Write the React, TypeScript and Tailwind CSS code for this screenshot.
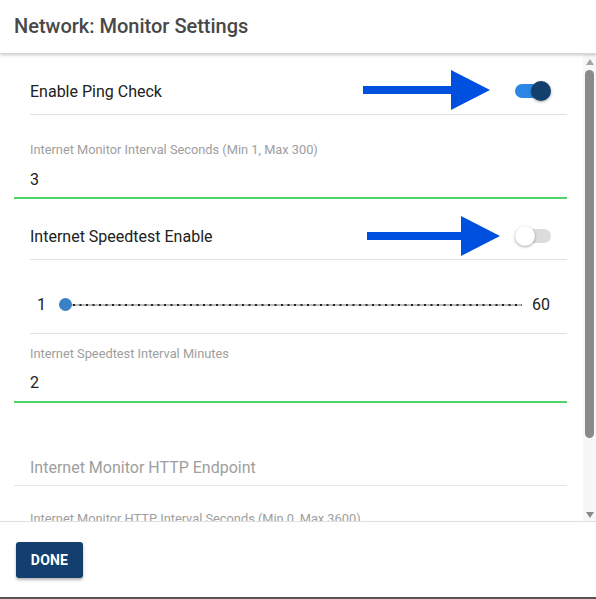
import React from "react";

function Arrow({ className, shaft }: { className: string; shaft: number }) {
  const w = shaft + 40;
  return (
    <svg className={className} width={w} height="42" viewBox={`0 0 ${w} 42`}>
      <rect x="0" y="17" width={shaft + 2} height="8" fill="#0050e0" />
      <polygon points={`${shaft},1 ${shaft + 39},21 ${shaft},41`} fill="#0050e0" />
    </svg>
  );
}

function Toggle({ on }: { on: boolean }) {
  return (
    <div className="relative w-[36px] h-[22px] flex items-center">
      <div
        className={
          on
            ? "w-[31px] h-[14px] rounded-full bg-[#2b87e3]"
            : "w-[36px] h-[14px] rounded-full bg-[#dcdcdc]"
        }
      />
      <div
        className={
          on
            ? "absolute left-[16px] top-[1px] w-[20px] h-[20px] rounded-full bg-[#123f6e] shadow-[0_1px_3px_rgba(0,0,0,0.35)]"
            : "absolute left-0 top-[1px] w-[20px] h-[20px] rounded-full bg-white shadow-[0_1px_3px_rgba(0,0,0,0.35)]"
        }
      />
    </div>
  );
}

export default function App() {
  return (
    <div className="w-[596px] h-[599px] flex flex-col bg-white font-['Roboto',sans-serif] border-b-2 border-[#555] overflow-hidden">
      <div className="relative z-10 h-[54px] shrink-0 px-[14px] flex items-center shadow-[0_1px_3px_rgba(0,0,0,0.22)] border-b border-[#d6d6d6]">
        <span className="text-[20px] font-medium text-[#484848] -mt-[2px]">Network: Monitor Settings</span>
      </div>

      <div className="flex-1 min-h-0 flex">
        <div className="flex-1 overflow-hidden pl-[14px] pr-[16px]">
          {/* Row 1 */}
          <div className="relative mt-[14px] ml-[16px] h-[47px] border-b border-[#e0e0e0] flex items-center justify-between">
            <span className="text-[16px] text-[#212121] mt-[1px]">Enable Ping Check</span>
            <div className="mr-[16px]">
              <Toggle on={true} />
            </div>
            <Arrow className="absolute left-[333px] top-[1px]" shaft={88} />
          </div>

          {/* Input 1 */}
          <div className="pt-[28px] pb-[5px] border-b-2 border-[#4fd36a]">
            <div className="pl-[16px] text-[12.8px] leading-[14px] text-[#9e9e9e]">
              Internet Monitor Interval Seconds (Min 1, Max 300)
            </div>
            <div className="pl-[16px] mt-[11px] text-[16px] leading-[24px] text-[#212121]">3</div>
          </div>

          {/* Row 2 */}
          <div className="relative mt-[14px] ml-[16px] h-[47px] border-b border-[#e0e0e0] flex items-center justify-between">
            <span className="text-[16px] text-[#212121] mt-[1px]">Internet Speedtest Enable</span>
            <div className="mr-[16px]">
              <Toggle on={false} />
            </div>
            <Arrow className="absolute left-[337px] top-[2px]" shaft={94} />
          </div>

          {/* Slider */}
          <div className="ml-[16px] h-[74px] pt-[16px] border-b border-[#e0e0e0] flex items-center">
            <span className="w-[14px] ml-[7px] text-[16px] text-[#212121]">1</span>
            <div className="relative flex-1 h-[13px] ml-[8px] mr-[10px] flex items-center">
              <svg className="w-full h-[2px]" preserveAspectRatio="none" viewBox="0 0 100 2">
                <line x1="0" y1="1" x2="100" y2="1" stroke="#bdbdbd" strokeWidth="2" />
              </svg>
              <svg className="absolute left-0 top-[5.5px] w-full h-[2px]" height="2">
                <line x1="1" y1="1" x2="100%" y2="1" stroke="#222" strokeWidth="2" strokeDasharray="2 4.5" />
              </svg>
              <div className="absolute left-0 top-0 w-[13px] h-[13px] rounded-full bg-[#3a81c6]" />
            </div>
            <span className="text-[16px] text-[#212121] mr-[17px]">60</span>
          </div>

          {/* Input 2 */}
          <div className="pt-[13px] pb-[6px] border-b-2 border-[#4fd36a]">
            <div className="pl-[16px] text-[12.8px] leading-[14px] text-[#9e9e9e]">
              Internet Speedtest Interval Minutes
            </div>
            <div className="pl-[16px] mt-[10px] text-[16px] leading-[24px] text-[#212121]">2</div>
          </div>

          {/* Input 3 */}
          <div className="pt-[53px] pb-[5px] border-b border-[#e6e6e6]">
            <div className="pl-[16px] text-[16px] leading-[24px] text-[#9e9e9e]">
              Internet Monitor HTTP Endpoint
            </div>
          </div>

          <div className="pt-[26px] pl-[16px] text-[12.8px] leading-[14px] text-[#9e9e9e] whitespace-nowrap">
            Internet Monitor HTTP Interval Seconds (Min 0, Max 3600)
          </div>
        </div>

        {/* Scrollbar */}
        <div className="w-[13px] shrink-0 bg-[#f7f7f7] flex flex-col items-center pt-[5px] pb-[3px]">
          <svg width="8" height="6" viewBox="0 0 8 6">
            <polygon points="4,0 8,6 0,6" fill="#a3a3a3" />
          </svg>
          <div className="mt-[5px] w-[9px] h-[368px] rounded-full bg-[#8a8a8a]" />
          <div className="flex-1" />
          <svg width="8" height="6" viewBox="0 0 8 6">
            <polygon points="0,0 8,0 4,6" fill="#8a8a8a" />
          </svg>
        </div>
      </div>

      <div className="h-[76px] shrink-0 border-t border-[#e0e0e0] px-[16px] pt-[20px]">
        <button className="w-[67px] h-[36px] rounded-[3px] bg-[#123f6e] text-white text-[14px] font-bold tracking-[0.2px] shadow-[0_2px_3px_rgba(0,0,0,0.3)]">
          DONE
        </button>
      </div>
    </div>
  );
}
